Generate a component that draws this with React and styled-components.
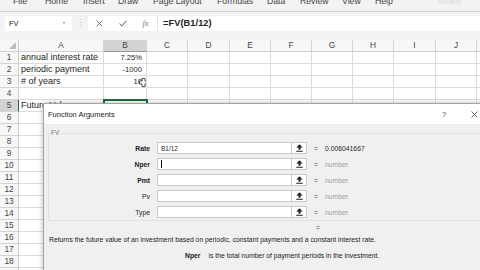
import React from 'react'
import styled, { createGlobalStyle } from 'styled-components'

const ui = `'Liberation Sans', Arial, sans-serif`

const GlobalStyle = createGlobalStyle`
  html, body {
    margin: 0;
    padding: 0;
    background: #fff;
  }
  body {
    width: 480px;
    height: 270px;
    overflow: hidden;
    font-family: ${ui};
  }
`

// each tab's slot runs from its own left edge to the next tab's
const tabs = [
  ['File', 32], ['Home', 38], ['Insert', 35], ['Draw', 35], ['Page Layout', 64],
  ['Formulas', 50], ['Data', 33], ['Review', 42], ['View', 33], ['Help', 63]
]
const columns = ['A', 'B', 'C', 'D', 'E', 'F', 'G', 'H', 'I', 'J', '']
const sheet = {
  1: ['annual interest rate', '7.25%'],
  2: ['periodic payment', '-1000'],
  3: ['# of years', '10'],
  5: ['Future Value', '']
}
const args = [
  { name: 'Rate', value: 'B1/12', result: '0.006041667', required: true },
  { name: 'Nper', value: '', result: 'number', required: true, focused: true },
  { name: 'Pmt', value: '', result: 'number', required: true },
  { name: 'Pv', value: '', result: 'number' },
  { name: 'Type', value: '', result: 'number' }
]

export default function App() {
  return (
    <Screen>
      <GlobalStyle />
      <TabBar>
        {tabs.map(([t, w]) => <Tab key={t} $w={w}>{t}</Tab>)}
        <Share>Share</Share>
      </TabBar>

      <FormulaBar>
        <NameBox>
          FV
          <Caret />
        </NameBox>
        <Grip>⋮</Grip>
        <FormulaField>
          <FxButton>
            <svg width="7" height="7" viewBox="0 0 7 7">
              <path d="M0.5 0.5 L6.5 6.5 M6.5 0.5 L0.5 6.5" stroke="#6b6b6b" strokeWidth="0.9" />
            </svg>
          </FxButton>
          <FxButton>
            <svg width="8" height="7" viewBox="0 0 8 7">
              <path d="M0.5 3.8 L2.8 6 L7.5 0.8" stroke="#4d4d4d" strokeWidth="1" fill="none" />
            </svg>
          </FxButton>
          <FxButton $fx>fx</FxButton>
          <FormulaInput>=FV(B1/12)</FormulaInput>
        </FormulaField>
      </FormulaBar>

      <Sheet>
        <Corner>
          <svg width="7" height="7" viewBox="0 0 7 7">
            <path d="M7 0 L7 7 L0 7 Z" fill="#bdbdbd" />
          </svg>
        </Corner>
        {columns.map((c, i) => (
          <ColHead key={i} $selected={c === 'B'}>{c}</ColHead>
        ))}
        {Array.from({ length: 19 }, (_, r) => {
          const row = r + 1
          const data = sheet[row] || []
          return (
            <React.Fragment key={row}>
              <RowHead $selected={row === 5}>{row}</RowHead>
              {columns.map((c, i) => (
                <Cell
                  key={i}
                  $num={i === 1}
                  $active={row === 5 && i === 1}
                >
                  {data[i]}
                  {row === 3 && i === 1 && (
                    <Pointer width="9" height="9" viewBox="0 0 9 9">
                      <path
                        d="M3 0.5 H6 V3 H8.5 V6 H6 V8.5 H3 V6 H0.5 V3 H3 Z"
                        fill="#fff"
                        stroke="#222"
                        strokeWidth="0.8"
                      />
                    </Pointer>
                  )}
                </Cell>
              ))}
            </React.Fragment>
          )
        })}
      </Sheet>

      <Dialog>
        <TitleBar>
          <Title>Function Arguments</Title>
          <TitleButton>?</TitleButton>
          <TitleButton>
            <svg width="7" height="7" viewBox="0 0 7 7">
              <path d="M0.5 0.5 L6.5 6.5 M6.5 0.5 L0.5 6.5" stroke="#444" strokeWidth="0.8" />
            </svg>
          </TitleButton>
        </TitleBar>
        <Body>
          <Group>
            <Legend>FV</Legend>
            <ArgGrid>
              {args.map(a => (
                <React.Fragment key={a.name}>
                  <ArgLabel $required={a.required}>{a.name}</ArgLabel>
                  <ArgInput>
                    {a.value}
                    {a.focused && <TextCaret />}
                  </ArgInput>
                  <CollapseButton>
                    <svg width="7" height="8" viewBox="0 0 7 8">
                      <path d="M3.5 0.3 L6.6 3.4 H4.5 V5.8 H2.5 V3.4 H0.4 Z" fill="#1f1f1f" />
                      <rect x="0.3" y="6.8" width="6.4" height="1" fill="#1f1f1f" />
                    </svg>
                  </CollapseButton>
                  <Equals>=</Equals>
                  <ArgResult $muted={a.result === 'number'}>{a.result}</ArgResult>
                </React.Fragment>
              ))}
            </ArgGrid>
          </Group>
          <ResultLine>=</ResultLine>
          <Description>
            Returns the future value of an investment based on periodic, constant payments and a constant interest rate.
          </Description>
          <ArgHelp>
            <ArgHelpName>Nper</ArgHelpName>
            <span>is the total number of payment periods in the investment.</span>
          </ArgHelp>
        </Body>
      </Dialog>
    </Screen>
  )
}

const Screen = styled.div`
  position: relative;
  width: 480px;
  height: 270px;
  overflow: hidden;
  background: #f3f3f3;
`

const TabBar = styled.div`
  display: flex;
  align-items: flex-end;
  height: 11px;
  padding-left: 13px;
  border-bottom: 1px solid #d6d6d6;
  overflow: hidden;
`
const Tab = styled.span`
  flex: none;
  width: ${p => p.$w}px;
  margin-bottom: 5px;
  font-size: 8.7px;
  line-height: 1;
  color: #444;
  white-space: nowrap;
`
const Share = styled(Tab)`
  color: #d8d8d8;
`

const FormulaBar = styled.div`
  display: flex;
  align-items: center;
  height: 22px;
  padding-left: 5px;
`
const NameBox = styled.div`
  display: flex;
  align-items: center;
  justify-content: space-between;
  box-sizing: border-box;
  width: 67px;
  height: 15px;
  padding: 0 7px 0 4px;
  background: #fff;
  font-size: 7.5px;
  color: #222;
`
const Caret = styled.span`
  width: 0;
  height: 0;
  border-left: 1.5px solid transparent;
  border-right: 1.5px solid transparent;
  border-top: 2px solid #777;
`
const Grip = styled.span`
  width: 16px;
  text-align: center;
  font-size: 9px;
  color: #c4c4c4;
`
const FormulaField = styled.div`
  display: flex;
  align-items: center;
  flex: 1;
  height: 15px;
  background: #fff;
`
const FxButton = styled.span`
  display: flex;
  align-items: center;
  justify-content: center;
  width: 23px;
  height: 100%;
  font-family: 'Liberation Serif', serif;
  font-style: italic;
  font-size: 8.5px;
  color: #6c8a4f;
  border-right: ${p => (p.$fx ? '1px solid #e2e2e2' : 'none')};
`
const FormulaInput = styled.span`
  padding-left: 5px;
  font-size: 9.2px;
  font-weight: 600;
  color: #222;
  letter-spacing: 0.1px;
`

const Sheet = styled.div`
  display: grid;
  grid-template-columns: 19px 85px 43px 41px 42px 41px 41px 41px 41px 42px 41px 1fr;
  grid-auto-rows: 12px;
  margin-top: 6px;
  background: #fff;
`
const Cell = styled.div`
  position: ${p => (p.$num ? 'relative' : 'static')};
  box-sizing: border-box;
  padding: 0 ${p => (p.$num ? '4px' : '2px')};
  border-right: 1px solid #dcdcdc;
  border-bottom: 1px solid #dcdcdc;
  font-size: ${p => (p.$num ? '7.6px' : '9px')};
  line-height: 11px;
  color: #1e1e1e;
  text-align: ${p => (p.$num ? 'right' : 'left')};
  white-space: nowrap;
  overflow: ${p => (p.$num ? 'hidden' : 'visible')};
  outline: ${p => (p.$active ? '2px solid #1e6b41' : 'none')};
  outline-offset: -1px;
`
const Pointer = styled.svg`
  position: absolute;
  left: 35px;
  top: 2px;
`
const Corner = styled.div`
  display: flex;
  align-items: flex-end;
  justify-content: flex-end;
  box-sizing: border-box;
  padding: 0 2px 2px 0;
  background: #f7f7f7;
  border-right: 1px solid #cfcfcf;
  border-bottom: 1px solid #cfcfcf;
`
const ColHead = styled.div`
  box-sizing: border-box;
  background: ${p => (p.$selected ? '#d3d3d3' : '#f7f7f7')};
  border-right: 1px solid #d4d4d4;
  border-bottom: 1px solid ${p => (p.$selected ? '#8f9c93' : '#cfcfcf')};
  font-size: 8.3px;
  line-height: 11px;
  color: #444;
  text-align: center;
`
const RowHead = styled.div`
  box-sizing: border-box;
  background: ${p => (p.$selected ? '#d3d3d3' : '#f7f7f7')};
  border-right: 1px solid ${p => (p.$selected ? '#1e6b41' : '#cfcfcf')};
  border-bottom: 1px solid #d4d4d4;
  font-size: 8.3px;
  line-height: 11px;
  color: #444;
  text-align: center;
`

const Dialog = styled.div`
  position: absolute;
  z-index: 10;
  left: 43px;
  top: 103px;
  display: flex;
  flex-direction: column;
  width: 445px;
  height: 180px;
  background: #f0f0f0;
  border: 1px solid #a3a3a3;
  box-shadow: 0 0 5px rgba(0, 0, 0, 0.28);
`
const TitleBar = styled.div`
  display: flex;
  align-items: center;
  height: 20px;
  padding-left: 4px;
  background: #fff;
`
const Title = styled.span`
  flex: 1;
  font-size: 7.5px;
  color: #1b1b1b;
`
const TitleButton = styled.span`
  display: flex;
  align-items: center;
  justify-content: center;
  width: 30px;
  font-size: 7.5px;
  color: #444;
`
const Body = styled.div`
  display: flex;
  flex-direction: column;
  padding: 5px 0 0 4px;
`
const Group = styled.fieldset`
  margin: 0;
  padding: 5px 0 2px 0;
  border: 1px solid #e2e2e2;
  border-right: none;
`
const Legend = styled.legend`
  margin-left: 1px;
  padding: 0 1px;
  font-size: 6.5px;
  line-height: 8px;
  color: #777;
`
const ArgGrid = styled.div`
  display: grid;
  grid-template-columns: 108px 135px 15px 18px auto;
  grid-auto-rows: 12px;
  row-gap: 4px;
  align-items: center;
`
const ArgLabel = styled.span`
  padding-right: 7px;
  text-align: right;
  font-size: 6.8px;
  font-weight: ${p => (p.$required ? 700 : 400)};
  color: #1b1b1b;
`
const ArgInput = styled.div`
  display: flex;
  align-items: center;
  box-sizing: border-box;
  height: 12px;
  padding-left: 3px;
  background: #fff;
  border: 1px solid #c9c9c9;
  font-size: 6.5px;
  color: #333;
`
const TextCaret = styled.span`
  width: 1px;
  height: 8px;
  background: #111;
`
const CollapseButton = styled.div`
  display: flex;
  align-items: center;
  justify-content: center;
  box-sizing: border-box;
  height: 12px;
  background: #fff;
  border: 1px solid #c9c9c9;
  border-left: none;
`
const Equals = styled.span`
  text-align: center;
  font-size: 7px;
  color: #555;
`
const ArgResult = styled.span`
  font-size: 6.8px;
  color: ${p => (p.$muted ? '#a0a0a0' : '#2a2a2a')};
`
const ResultLine = styled.div`
  height: 10px;
  margin-top: 2px;
  padding-left: 268px;
  font-size: 7px;
  line-height: 10px;
  color: #555;
`
const Description = styled.div`
  margin-top: 2px;
  padding-left: 1px;
  font-size: 6.8px;
  line-height: 10px;
  color: #1b1b1b;
  white-space: nowrap;
`
const ArgHelp = styled.div`
  display: flex;
  gap: 8px;
  margin-top: 6px;
  padding-left: 137px;
  font-size: 6.8px;
  line-height: 10px;
  color: #1b1b1b;
  white-space: nowrap;
`
const ArgHelpName = styled.span`
  font-weight: 700;
  font-size: 6.8px;
`
